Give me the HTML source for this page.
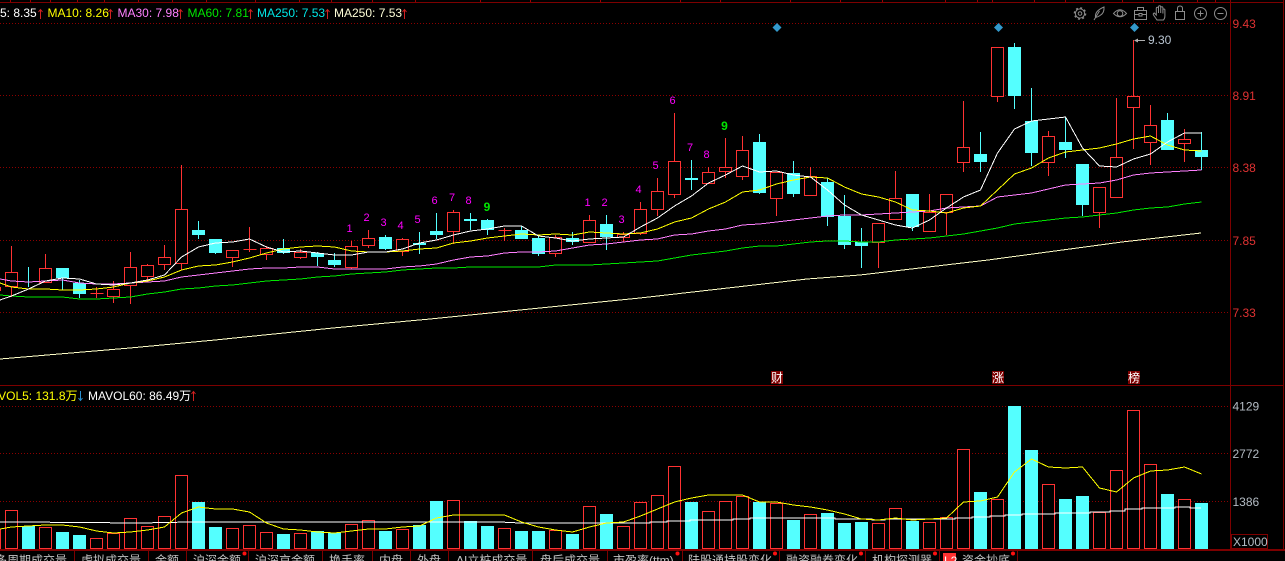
<!DOCTYPE html>
<html><head><meta charset="utf-8"><style>
html,body{margin:0;padding:0;background:#000;width:1285px;height:561px;overflow:hidden}
svg{display:block}
text{font-family:"Liberation Sans","Noto Sans CJK SC",sans-serif;font-size:12px}
.l{fill:none;stroke-width:1;shape-rendering:crispEdges}
.t text{fill:#c4c4c4}
.d text{font-size:11px}
</style></head><body>
<svg width="1285" height="561" viewBox="0 0 1285 561" xmlns="http://www.w3.org/2000/svg">
<rect width="1285" height="561" fill="#000"/>
<!-- frame -->
<g shape-rendering="crispEdges">
<path d="M0 23.5H1230M0 95.5H1230M0 167.5H1230M0 240.5H1230M0 312.5H1230M0 406.5H1230M0 453.5H1230M0 501.5H1230" stroke="#8c0000" stroke-dasharray="1 2" fill="none"/>
<path d="M0 2.5H1284M0 385.5H1284M1230.5 0V549M1283.5 0V549" stroke="#7d0000" fill="none"/>
<path d="M10.5 0V2M30.5 0V2M50.5 0V2M77.5 0V2M104.5 0V2M138.5 0V2M172.5 0V2M206.5 0V2M255.5 0V2M299.5 0V2M331.5 0V2M372.5 0V2M415.5 0V2M480.5 0V2M530.5 0V2M600.5 0V2M680.5 0V2M720.5 0V2M790.5 0V2M840.5 0V2M882.5 0V2M945.5 0V2M977.5 0V2M992.5 0V2M1034.5 0V2M1065.5 0V2M1122.5 0V2M1153.5 0V2M1197.5 0V2M1215.5 0V2" stroke="#9a0000" fill="none"/>
<rect x="0" y="549" width="1285" height="2" fill="#7d0000"/>
<path d="M74.5 551V561M148.5 551V561M186.5 551V561M248.5 551V561M322.5 551V561M372.5 551V561M410.5 551V561M448.5 551V561M532.5 551V561M607.5 551V561M682.5 551V561M779.5 551V561M865.5 551V561M939.5 551V561M1017.5 551V561" stroke="#7d0000" fill="none"/>
<rect x="1231.5" y="534.5" width="36" height="14" fill="none" stroke="#7d0000"/>
</g>

<!-- red wicks -->
<path class="l" stroke="#ff3232" d="M11.5 246V297M45.5 254V282M96.5 287V298M113.5 281V303M130.5 252V304M147.5 264V282M164.5 245V270M181.5 165V270M232.5 250V267M249.5 227V252M266.5 246V260M300.5 249V259M351.5 241V269M368.5 230V248M402.5 238V256M453.5 210V244M504.5 228V241M555.5 235V257M589.5 215V242M623.5 232V242M640.5 202V235M657.5 178V216M674.5 113V198M708.5 167V183M725.5 138V178M742.5 136V180M776.5 172V216M810.5 167V195M878.5 223V268M895.5 171V219M929.5 194V231M946.5 194V235M963.5 101V172M997.5 47V102M1048.5 131V176M1099.5 187V228M1116.5 98V198M1133.5 40V149M1150.5 105V165M1184.5 129V162"/>
<!-- cyan wicks -->
<path class="l" stroke="#54ffff" d="M28.5 267V287M62.5 268V290M79.5 280V298M198.5 221V239M215.5 239V254M283.5 239V254M317.5 252V266M334.5 253V267M385.5 235V250M419.5 232V254M436.5 213V239M470.5 213V230M487.5 219V235M521.5 226V239M538.5 235V256M572.5 232V245M606.5 215V250M691.5 160V190M759.5 134V194M793.5 161V197M827.5 178V226M844.5 195V249M861.5 228V268M912.5 194V231M980.5 132V172M1014.5 43V109M1031.5 88V166M1065.5 117V158M1082.5 164V216M1167.5 113V150M1201.5 132V170"/>
<!-- red bodies -->
<path shape-rendering="crispEdges" fill="#000" stroke="#ff3232" d="M-11.5 287.5h12v3h-12zM5.5 272.5h12v14h-12zM39.5 268.5h12v14h-12zM90.5 293.5h13M107.5 289.5h12v7h-12zM124.5 267.5h12v18h-12zM141.5 265.5h12v11h-12zM158.5 257.5h12v7h-12zM175.5 209.5h12v54h-12zM226.5 250.5h12v7h-12zM243.5 249.5h13M260.5 248.5h12v6h-12zM294.5 252.5h12v5h-12zM345.5 246.5h12v21h-12zM362.5 238.5h12v7h-12zM396.5 239.5h12v12h-12zM447.5 212.5h12v19h-12zM498.5 230.5h13M549.5 237.5h12v16h-12zM583.5 220.5h12v22h-12zM617.5 234.5h12v3h-12zM634.5 209.5h12v24h-12zM651.5 191.5h12v18h-12zM668.5 161.5h12v33h-12zM702.5 172.5h12v11h-12zM719.5 167.5h12v4h-12zM736.5 150.5h12v26h-12zM770.5 172.5h12v26h-12zM804.5 176.5h12v19h-12zM872.5 223.5h12v19h-12zM889.5 198.5h12v21h-12zM923.5 212.5h12v19h-12zM940.5 194.5h12v18h-12zM957.5 147.5h12v15h-12zM991.5 47.5h12v49h-12zM1042.5 136.5h12v26h-12zM1093.5 187.5h12v25h-12zM1110.5 157.5h12v40h-12zM1127.5 96.5h12v11h-12zM1144.5 125.5h12v17h-12zM1178.5 139.5h12v4h-12z"/>
<!-- cyan bodies -->
<path shape-rendering="crispEdges" fill="#54ffff" d="M56 268h13v10h-13zM73 283h13v11h-13zM192 230h13v5h-13zM209 239h13v14h-13zM277 248h13v5h-13zM311 253h13v4h-13zM328 260h13v5h-13zM379 237h13v12h-13zM413 243h13v2h-13zM430 231h13v4h-13zM464 219h13v2h-13zM481 220h13v10h-13zM515 230h13v9h-13zM532 238h13v16h-13zM566 238h13v4h-13zM600 224h13v13h-13zM685 178h13v2h-13zM753 142h13v51h-13zM787 173h13v21h-13zM821 182h13v35h-13zM838 216h13v29h-13zM855 242h13v4h-13zM906 194h13v33h-13zM974 154h13v8h-13zM1008 47h13v49h-13zM1025 121h13v32h-13zM1059 142h13v8h-13zM1076 164h13v41h-13zM1161 120h13v30h-13zM1195 150h13v7h-13z"/>

<!-- main MA lines -->
<polyline class="l" stroke="#ffffc8" points="0,359 130,348 215,340 333,328 430,319 640,298 807,279 860,275 988,260 1122,242 1201,233"/>
<polyline class="l" stroke="#00e600" points="0,295 11.5,296 28.5,297 45.5,297 62.5,297 79.5,299 96.5,299 113.5,298 130.5,297 147.5,294 164.5,292 181.5,289 198.5,288 215.5,286 232.5,285 249.5,283 266.5,281 283.5,280 300.5,279 317.5,277 334.5,276 351.5,274 368.5,273 385.5,272 402.5,270 419.5,269 436.5,268 453.5,268 470.5,267 487.5,267 504.5,267 521.5,267 538.5,267 555.5,265 572.5,265 589.5,265 606.5,264 623.5,263 640.5,262 657.5,261 674.5,258 691.5,255 708.5,253 725.5,251 742.5,248 759.5,246 776.5,246 793.5,244 810.5,242 827.5,241 844.5,241 861.5,242 878.5,242 895.5,240 912.5,239 929.5,238 946.5,236 963.5,234 980.5,231 997.5,228 1014.5,224 1031.5,222 1048.5,220 1065.5,218 1082.5,217 1099.5,215 1116.5,213 1133.5,210 1150.5,208 1167.5,207 1184.5,204 1201.5,202"/>
<polyline class="l" stroke="#ff80ff" points="0,279 11.5,281 28.5,282 45.5,281 62.5,280 79.5,283 96.5,284 113.5,284 130.5,283 147.5,282 164.5,281 181.5,277 198.5,275 215.5,273 232.5,271 249.5,269 266.5,268 283.5,268 300.5,267 317.5,267 334.5,269 351.5,269 368.5,269 385.5,269 402.5,267 419.5,266 436.5,264 453.5,260 470.5,257 487.5,256 504.5,253 521.5,252 538.5,252 555.5,251 572.5,248 589.5,245 606.5,244 623.5,242 640.5,240 657.5,239 674.5,235 691.5,234 708.5,231 725.5,229 742.5,225 759.5,224 776.5,222 793.5,220 810.5,218 827.5,216 844.5,215 861.5,215 878.5,214 895.5,213 912.5,212 929.5,211 946.5,208 963.5,207 980.5,206 997.5,197 1014.5,195 1031.5,193 1048.5,189 1065.5,185 1082.5,184 1099.5,183 1116.5,180 1133.5,175 1150.5,173 1167.5,172 1184.5,171 1201.5,170"/>
<polyline class="l" stroke="#ffff00" points="0,283 11.5,287 28.5,289 45.5,289 62.5,290 79.5,290 96.5,289 113.5,287 130.5,283 147.5,281 164.5,277 181.5,270 198.5,266 215.5,265 232.5,262 249.5,258 266.5,253 283.5,249 300.5,247 317.5,246 334.5,247 351.5,251 368.5,252 385.5,252 402.5,251 419.5,249 436.5,248 453.5,243 470.5,241 487.5,238 504.5,236 521.5,234 538.5,235 555.5,234 572.5,235 589.5,232 606.5,233 623.5,234 640.5,233 657.5,229 674.5,222 691.5,218 708.5,209 725.5,202 742.5,192 759.5,190 776.5,184 793.5,180 810.5,177 827.5,178 844.5,187 861.5,194 878.5,197 895.5,202 912.5,210 929.5,211 946.5,213 963.5,208 980.5,206 997.5,190 1014.5,174 1031.5,168 1048.5,158 1065.5,152 1082.5,150 1099.5,148 1116.5,144 1133.5,139 1150.5,136 1167.5,145 1184.5,150 1201.5,151"/>
<polyline class="l" stroke="#ffffff" points="0,300 11.5,296 28.5,289 45.5,281 62.5,278 79.5,279 96.5,284 113.5,285 130.5,283 147.5,280 164.5,275 181.5,257 198.5,247 215.5,243 232.5,242 249.5,239 266.5,247 283.5,252 300.5,251 317.5,253 334.5,255 351.5,255 368.5,252 385.5,252 402.5,249 419.5,243 436.5,240 453.5,235 470.5,231 487.5,229 504.5,226 521.5,226 538.5,236 555.5,238 572.5,241 589.5,239 606.5,238 623.5,237 640.5,227 657.5,218 674.5,206 691.5,196 708.5,183 725.5,175 742.5,166 759.5,172 776.5,171 793.5,175 810.5,177 827.5,190 844.5,205 861.5,215 878.5,220 895.5,225 912.5,228 929.5,220 946.5,208 963.5,197 980.5,190 997.5,153 1014.5,129 1031.5,121 1048.5,119 1065.5,117 1082.5,148 1099.5,166 1116.5,167 1133.5,159 1150.5,154 1167.5,142 1184.5,133 1201.5,133"/>

<!-- labels on the candles -->
<g class="d" fill="#ff00ff" text-anchor="middle">
<text x="349.5" y="232">1</text><text x="366.5" y="221">2</text><text x="383.5" y="226">3</text><text x="400.5" y="229">4</text><text x="417.5" y="223">5</text><text x="434.5" y="204">6</text><text x="452" y="201">7</text><text x="468.5" y="204">8</text>
<text x="587.5" y="206">1</text><text x="604.5" y="206">2</text><text x="621.5" y="223">3</text><text x="638.5" y="193">4</text><text x="655.5" y="169">5</text><text x="672.5" y="104">6</text><text x="690" y="151">7</text><text x="706.5" y="158">8</text>
</g>
<g fill="#00e600" text-anchor="middle" style="font-weight:bold"><text x="487" y="211">9</text><text x="724.5" y="130">9</text></g>

<!-- diamonds -->
<g fill="#3399cc"><path d="M777 23l4.5 4.5-4.5 4.5-4.5-4.5z"/><path d="M998.5 23l4.5 4.5-4.5 4.5-4.5-4.5z"/><path d="M1134.5 23l4.5 4.5-4.5 4.5-4.5-4.5z"/></g>

<!-- max label -->
<path d="M1134 40.5l4-2v1.5h7v1h-7v1.5z" fill="#b0b0b0"/>
<text x="1148" y="44" fill="#b8c4d0">9.30</text>

<!-- header -->
<g>
<text x="0" y="17" fill="#ffffff">5: 8.35</text>
<text x="47.5" y="17" fill="#ffff00">MA10: 8.26</text>
<text x="117.5" y="17" fill="#ff80ff">MA30: 7.98</text>
<text x="187.5" y="17" fill="#00e600">MA60: 7.81</text>
<text x="257" y="17" fill="#00e6e6">MA250: 7.53</text>
<text x="334" y="17" fill="#ffffd8">MA250: 7.53</text>
</g>
<g fill="none" stroke="#d02020"><path d="M40.5 10V19M38.5 12l2-2.5 2 2.5M110.5 10V19M108.5 12l2-2.5 2 2.5M180.5 10V19M178.5 12l2-2.5 2 2.5M250.5 10V19M248.5 12l2-2.5 2 2.5M327.5 10V19M325.5 12l2-2.5 2 2.5M404.5 10V19M402.5 12l2-2.5 2 2.5"/></g>

<!-- axis labels -->
<g fill="#e03232"><text x="1232.5" y="28">9.43</text><text x="1232.5" y="100">8.91</text><text x="1232.5" y="172">8.38</text><text x="1232.5" y="245">7.85</text><text x="1232.5" y="317">7.33</text></g>

<!-- badge labels -->
<g shape-rendering="crispEdges" fill="#7d0000"><rect x="771" y="371" width="12" height="13"/><rect x="992" y="371" width="12" height="13"/><rect x="1128" y="371" width="12" height="13"/></g>
<g fill="#ffffff" text-anchor="middle"><text x="777" y="382">财</text><text x="998" y="382">涨</text><text x="1134" y="382">榜</text></g>

<!-- toolbar icons -->
<g fill="none" stroke="#8c8c8c" stroke-width="1">
<circle cx="1080" cy="13.5" r="4.6"/><circle cx="1080" cy="13.5" r="5.6" stroke-width="1.4" stroke-dasharray="2 2.4"/><circle cx="1080" cy="13.5" r="1.8"/>
<path d="M1094 20L1099.5 11M1095.5 17.5Q1094.5 11 1104 7Q1104.5 13 1100 15.5Q1098 17 1095.5 17.5z"/>
<path d="M1113.5 13.5Q1120 6 1126.5 13.5Q1120 20 1113.5 13.5z"/><circle cx="1120" cy="13.5" r="2.8"/>
<path d="M1134.5 10.5h12v9h-12zM1137.5 10.5v-3h6v3M1134.5 14.5h4.5M1142 14.5h4.5M1139 13.5h3v2.500h-3z"/>
<path d="M1157 20L1153.500 15q-.8-1.500.8-2l2 2V8.500q0-1.200 1.100-1.200t1.100 1.200V13V7q0-1.200 1.100-1.200t1.100 1.200V13V8q0-1.200 1.100-1.200t1.100 1.200V13.500V10q0-1 1-1t1 1V16q0 2.500-1.500 4z"/>
<path d="M1175.500 11.500h9v8h-9zM1177.500 11.500v-3q0-2.500 2.500-2.500t2.500 2.500v3"/>
<circle cx="1200.500" cy="13.500" r="6"/><path d="M1197.500 13.500h6M1200.500 10.500v6"/>
<circle cx="1220.500" cy="13.500" r="6"/><path d="M1217.500 13.500h6"/>
</g>

<!-- volume bars -->
<path shape-rendering="crispEdges" fill="#000" stroke="#ff3232" d="M-11.500 529.500h12V548.500h-12zM5.500 510.500h12V548.500h-12zM39.500 527.500h12V548.500h-12zM90.500 538.500h12V548.500h-12zM107.500 533.500h12V548.500h-12zM124.500 518.500h12V548.500h-12zM141.500 526.500h12V548.500h-12zM158.500 516.500h12V548.500h-12zM175.500 475.500h12V548.500h-12zM226.500 528.500h12V548.500h-12zM243.500 525.500h12V548.500h-12zM260.500 532.500h12V548.500h-12zM294.500 533.500h12V548.500h-12zM345.500 524.500h12V548.500h-12zM362.500 520.500h12V548.500h-12zM396.500 529.500h12V548.500h-12zM447.500 500.500h12V548.500h-12zM498.500 528.500h12V548.500h-12zM549.500 530.500h12V548.500h-12zM583.500 506.500h12V548.500h-12zM617.500 526.500h12V548.500h-12zM634.500 502.500h12V548.500h-12zM651.500 495.500h12V548.500h-12zM668.500 466.500h12V548.500h-12zM702.500 511.500h12V548.500h-12zM719.500 501.500h12V548.500h-12zM736.500 496.500h12V548.500h-12zM770.500 503.500h12V548.500h-12zM804.500 514.500h12V548.500h-12zM872.500 523.500h12V548.500h-12zM889.500 508.500h12V548.500h-12zM923.500 522.500h12V548.500h-12zM940.500 517.500h12V548.500h-12zM957.500 449.500h12V548.500h-12zM991.500 499.500h12V548.500h-12zM1042.500 484.500h12V548.500h-12zM1093.500 512.500h12V548.500h-12zM1110.500 470.500h12V548.500h-12zM1127.500 410.500h12V548.500h-12zM1144.500 464.500h12V548.500h-12zM1178.500 499.500h12V548.500h-12z"/>
<path shape-rendering="crispEdges" fill="#54ffff" d="M22 526h13V549h-13zM56 532h13V549h-13zM73 535h13V549h-13zM192 502h13V549h-13zM209 527h13V549h-13zM277 534h13V549h-13zM311 531h13V549h-13zM328 533h13V549h-13zM379 531h13V549h-13zM413 525h13V549h-13zM430 501h13V549h-13zM464 521h13V549h-13zM481 526h13V549h-13zM515 531h13V549h-13zM532 531h13V549h-13zM566 534h13V549h-13zM600 514h13V549h-13zM685 502h13V549h-13zM753 502h13V549h-13zM787 520h13V549h-13zM821 513h13V549h-13zM838 523h13V549h-13zM855 522h13V549h-13zM906 521h13V549h-13zM974 492h13V549h-13zM1008 406h13V549h-13zM1025 450h13V549h-13zM1059 499h13V549h-13zM1076 496h13V549h-13zM1161 494h13V549h-13zM1195 503h13V549h-13z"/>
<polyline class="l" stroke="#ffffff" points="0,522 20,522 20,522 140,523 190,522 260,522 500,522 520,523 650,523 650,522 667,522 667,521 690,521 690,520 733,520 733,519 750,519 750,518 835,518 835,519 872,519 872,520 885,520 885,519 955,519 955,518 972,518 972,517 990,517 990,516 1005,516 1005,515 1022,515 1022,514 1055,514 1055,513 1090,513 1090,512 1110,512 1110,511 1125,511 1125,509 1142,509 1142,508 1175,508 1175,507 1190,507 1190,508 1201,508"/>
<polyline class="l" stroke="#ffff00" points="0,529 11.5,527 28.5,526 45.5,525 62.5,525 79.5,527 96.5,531 113.5,533 130.5,532 147.5,530 164.5,527 181.5,513 198.5,507 215.5,509 232.5,509 249.5,512 266.5,523 283.5,529 300.5,530 317.5,532 334.5,533 351.5,531 368.5,529 385.5,529 402.5,527 419.5,526 436.5,518 453.5,515 470.5,515 487.5,515 504.5,515 521.5,522 538.5,527 555.5,530 572.5,532 589.5,527 606.5,523 623.5,522 640.5,516 657.5,509 674.5,502 691.5,498 708.5,495 725.5,495 742.5,495 759.5,502 776.5,502 793.5,505 810.5,507 827.5,510 844.5,514 861.5,519 878.5,520 895.5,518 912.5,520 929.5,519 946.5,518 963.5,502 980.5,501 997.5,497 1014.5,472 1031.5,459 1048.5,467 1065.5,468 1082.5,467 1099.5,488 1116.5,492 1133.5,478 1150.5,471 1167.5,470 1184.5,467 1201.5,474"/>

<!-- volume header -->
<text x="-19" y="400" fill="#ffff00">MAVOL5: 131.8万</text>
<text x="88" y="400" fill="#ffffff">MAVOL60: 86.49万</text>
<path fill="none" stroke="#2a90d0" d="M80.500 391V400.500M78.500 398l2 2.500 2-2.500"/>
<path fill="none" stroke="#d02020" d="M193.500 392V401M191.500 394l2-2.500 2 2.500"/>

<g fill="#b4bcc4"><text x="1232.500" y="410.500">4129</text><text x="1232.500" y="458">2772</text><text x="1232.500" y="506">1386</text><text x="1233" y="546">X1000</text></g>

<!-- bottom tabs -->
<g class="t">
<text x="-5" y="564.500">多周期成交量</text>
<text x="81" y="564.500">虚拟成交量</text>
<text x="155" y="564.500">金额</text>
<text x="193" y="564.500">沪深金额</text>
<text x="255" y="564.500">沪深京金额</text>
<text x="329" y="564.500">换手率</text>
<text x="379" y="564.500">内盘</text>
<text x="417" y="564.500">外盘</text>
<text x="456" y="564.500">AI立桩成交量</text>
<text x="540" y="564.500">盘后成交量</text>
<text x="613" y="564.500">市盈率(ttm)</text>
<text x="688" y="564.500">陆股通持股变化</text>
<text x="786" y="564.500">融资融券变化</text>
<text x="872" y="564.500">机构探测器</text>
<text x="962" y="564.500">资金抄底</text>
</g>
<rect x="943" y="553" width="13" height="8" fill="#ff3232"/>
<text x="944" y="565" fill="#fff">L2</text>
<g fill="#ff1010"><circle cx="244.500" cy="553.500" r="2"/><circle cx="677.500" cy="553.500" r="2"/><circle cx="775" cy="553.500" r="2"/><circle cx="861" cy="553.500" r="2"/><circle cx="935" cy="553.500" r="2"/><circle cx="1013" cy="553.500" r="2"/></g>
</svg>
</body></html>
